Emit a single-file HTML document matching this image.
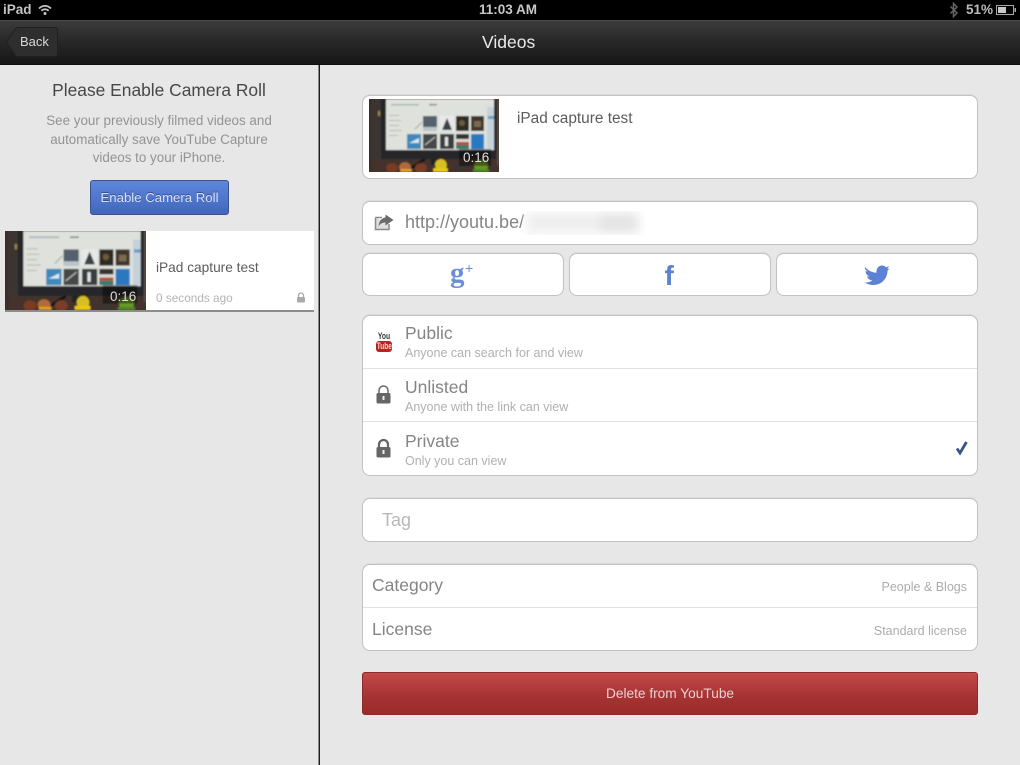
<!DOCTYPE html>
<html>
<head>
<meta charset="utf-8">
<style>
html,body{margin:0;padding:0;width:1020px;height:765px;overflow:hidden;background:#e7e7e7;font-family:"Liberation Sans",sans-serif}
.a{position:absolute;white-space:nowrap}
.card{position:absolute;box-sizing:border-box;background:#fff;border:1px solid #c2c2c2;border-radius:8px;box-shadow:0 -1px 0 #dcdcdc}
.line{position:absolute;left:363px;width:614px;height:1px;background:#e0e0e0}
.big{font-size:17.500px;color:#858585}
.sub{font-size:12.500px;color:#b0b0b0}
.right{font-size:12.500px;color:#acacac;text-align:right;right:53px}
</style>
</head>
<body>
<svg width="0" height="0" style="position:absolute">
<defs>
<filter id="b" x="-5%" y="-5%" width="110%" height="110%"><feGaussianBlur stdDeviation="0.7"/></filter>
<filter id="b2"><feGaussianBlur stdDeviation="5"/></filter>
<symbol id="thumb" viewBox="0 0 130 73" preserveAspectRatio="none">
<rect width="130" height="73" fill="#43332c"/>
<g filter="url(#b)">
<rect x="0" y="0" width="3" height="73" fill="#3a2e2a"/>
<rect x="3" y="0" width="9" height="60" fill="#3b3533"/>
<rect x="9" y="12" width="2" height="5" fill="#a08a50"/>
<rect x="128" y="0" width="2" height="66" fill="#5c5048"/>
<rect x="12" y="0" width="116" height="60" fill="#25252a"/>
<rect x="17" y="0" width="108" height="51" fill="#dfe2dc"/>
<rect x="118" y="8" width="7" height="42" fill="#c6d2da"/>
<rect x="119" y="17" width="6" height="3" fill="#6a9cc4"/>
<rect x="22" y="5" width="28" height="1.500" fill="#aab2b4"/>
<rect x="60" y="5" width="8" height="1.500" fill="#888"/>
<rect x="20" y="16" width="10" height="1" fill="#b4b8b2"/><rect x="20" y="21" width="12" height="1" fill="#b8bab4"/><rect x="20" y="26" width="10" height="1" fill="#b8bab4"/><rect x="20" y="31" width="13" height="1" fill="#b8bab4"/><rect x="20" y="36" width="9" height="1" fill="#b8bab4"/>
<path d="M46 30l7-7" stroke="#a0a29c" fill="none"/>
<rect x="54" y="17" width="14" height="15" fill="#55616d"/><rect x="54" y="28" width="14" height="4" fill="#bcc4cc"/>
<rect x="71" y="17" width="14" height="15" fill="#e8e8e8"/><path d="M78 19l-5 12h10z" fill="#3a3f48"/>
<rect x="87" y="17" width="13" height="15" fill="#2f2a26"/><circle cx="93" cy="24" r="3" fill="#6a5a38"/>
<rect x="102" y="17" width="13" height="15" fill="#40352c"/><rect x="105" y="22" width="7" height="6" fill="#7a6a50"/>
<rect x="38" y="35" width="14" height="15" fill="#3f88bc"/><path d="M40 44l10-5v5z" fill="#d8e8f0"/>
<rect x="54" y="35" width="14" height="15" fill="#45474a"/><path d="M56 46l10-8" stroke="#c8c8c8"/>
<rect x="71" y="35" width="14" height="15" fill="#383c40"/><path d="M76 38h3v9h-3z" fill="#e4e4e4"/>
<rect x="87" y="35" width="13" height="15" fill="#d8d8d4"/><rect x="87" y="35" width="13" height="5" fill="#333"/><rect x="87" y="43" width="13" height="3" fill="#b84a3a"/><rect x="87" y="46" width="13" height="4" fill="#3a7a6a"/>
<rect x="102" y="35" width="13" height="15" fill="#2a78c0"/>
<rect x="62" y="60" width="14" height="6" fill="#222"/>
<path d="M38 72l18-12" stroke="#111" stroke-width="2"/>
<ellipse cx="23" cy="69" rx="6" ry="5" fill="#7a3a22"/>
<ellipse cx="36" cy="68" rx="6" ry="5" fill="#b06a3a"/><rect x="31" y="70" width="12" height="3" fill="#e0a020"/>
<ellipse cx="52" cy="69" rx="6" ry="5" fill="#7a3e28"/>
<ellipse cx="72" cy="66" rx="6" ry="6" fill="#d8c024"/><rect x="64" y="69" width="15" height="4" fill="#e8c818"/>
<ellipse cx="92" cy="68" rx="6" ry="5" fill="#3a3432"/>
<ellipse cx="112" cy="67" rx="7" ry="6" fill="#6a9a2a"/><rect x="104" y="70" width="16" height="3" fill="#4e8a24"/>
<rect x="90" y="50" width="32" height="17" fill="#000" opacity=".4"/>
</g>
</symbol>
</defs>
</svg>

<!-- status bar -->
<div class="a" style="left:0;top:0;width:1020px;height:20px;background:#000"></div>
<div class="a" style="left:3px;top:2px;font-size:13.500px;font-weight:bold;color:#c4c4c4">iPad</div>
<svg class="a" style="left:38px;top:4px" width="14" height="12" viewBox="0 0 14 12"><path d="M1 4.500C4.500 1 9.500 1 13 4.500M3.300 6.800C5.500 4.700 8.500 4.700 10.700 6.800" stroke="#c4c4c4" stroke-width="1.700" fill="none"/><circle cx="7" cy="9.500" r="1.500" fill="#c4c4c4"/></svg>
<div class="a" style="left:479px;top:2px;font-size:13.500px;font-weight:bold;color:#c8c8c8">11:03 AM</div>
<svg class="a" style="left:949px;top:2px" width="10" height="16" viewBox="0 0 10 16"><path d="M1.500 4.500L8 11l-3.500 3.500v-13L8 5 1.500 11.500" stroke="#666" stroke-width="1.500" fill="none"/></svg>
<div class="a" style="left:966px;top:2px;font-size:13.500px;font-weight:bold;color:#bdbdbd">51%</div>
<svg class="a" style="left:996px;top:4px" width="21" height="12" viewBox="0 0 21 12"><rect x=".5" y="1.500" width="17" height="9" fill="none" stroke="#a8a8a8"/><rect x="2" y="3" width="8" height="6" fill="#c8c8c8"/><rect x="18.500" y="4" width="1.500" height="4" fill="#a8a8a8"/></svg>

<!-- nav -->
<div class="a" style="left:0;top:20px;width:1020px;height:44px;background:linear-gradient(#3c3c3c,#2a2a2a 40%,#171717);border-top:1px solid #4a4a4a;box-sizing:border-box"></div>
<div class="a" style="left:0;top:64px;width:1020px;height:1px;background:#111"></div>
<svg class="a" style="left:6px;top:27px" width="52" height="30" viewBox="0 0 52 30"><path d="M.5 15L9.500 1.500Q10 .5 12 .5H49Q51.500 .5 51.500 3V27Q51.500 29.500 49 29.500H12Q10 29.500 9.500 28.500Z" fill="#2e2e2e" stroke="#202020"/></svg>
<div class="a" style="left:20px;top:34px;font-size:13px;color:#d8d8d8">Back</div>
<div class="a" style="left:482px;top:32px;font-size:17.500px;color:#eaeaea">Videos</div>

<!-- divider -->
<div class="a" style="left:318px;top:65px;width:1px;height:700px;background:#8a8a8a"></div>
<div class="a" style="left:319px;top:65px;width:1px;height:700px;background:#1c1c1c"></div>

<!-- left panel -->
<div class="a" style="left:0;width:318px;text-align:center;top:80px;font-size:17.400px;color:#474747">Please Enable Camera Roll</div>
<div class="a" style="left:0;width:318px;text-align:center;top:112px;font-size:13.400px;line-height:18.500px;color:#939393">See your previously filmed videos and<br>automatically save YouTube Capture<br>videos to your iPhone.</div>
<div class="a" style="left:90px;top:180px;width:139px;height:35px;box-sizing:border-box;border:1px solid #37548e;border-radius:3px;background:linear-gradient(#5f86dd,#4167bd);text-align:center;font-size:13.200px;line-height:34px;color:#d8e2f6;text-shadow:0 -1px 0 #34518f">Enable Camera Roll</div>

<div class="a" style="left:5px;top:231px;width:309px;height:81px;background:#fff;border-bottom:2px solid #8c8c8c;box-sizing:border-box"></div>
<svg class="a" style="left:5px;top:231px" width="141" height="79"><use href="#thumb" width="141" height="79"/></svg>
<div class="a" style="left:110px;top:289px;font-size:13.500px;color:#dcdcdc">0:16</div>
<div class="a" style="left:156px;top:260px;font-size:13.700px;color:#5c5c5c">iPad capture test</div>
<div class="a" style="left:156px;top:291px;font-size:11.800px;color:#b4b4b4">0 seconds ago</div>
<svg class="a" style="left:296px;top:292px" width="10" height="11" viewBox="0 0 10 11"><path d="M2.500 5V3.500a2.500 2.500 0 0 1 5 0V5" stroke="#aaa" stroke-width="1.300" fill="none"/><rect x="1" y="5" width="8" height="5.500" rx="1" fill="#aaa"/></svg>

<!-- video card -->
<div class="card" style="left:362px;top:95px;width:616px;height:84px"></div>
<svg class="a" style="left:369px;top:99px" width="130" height="73"><use href="#thumb" width="130" height="73"/></svg>
<div class="a" style="left:463px;top:150px;font-size:13.500px;color:#e0e0e0">0:16</div>
<div class="a" style="left:517px;top:110px;font-size:15.400px;color:#5c5c5c">iPad capture test</div>

<!-- url -->
<div class="card" style="left:362px;top:201px;width:616px;height:44px"></div>
<svg class="a" style="left:374px;top:213px" width="20" height="18" viewBox="0 0 20 18"><path d="M1.500 4.500V16.500H15V11" stroke="#8a8a8a" stroke-width="1.500" fill="#dedede"/><path d="M1.500 4.500H8" stroke="#8a8a8a" stroke-width="1.500"/><path d="M11.500 1.500L19.500 7 11.500 12.500V9.500C8.500 9.500 6 10.500 4.500 13.500 4.800 8.500 7.500 5 11.500 4.500Z" fill="#6a6a6a"/></svg>
<div class="a" style="left:405px;top:212px;font-size:18px;color:#858585">http://youtu.be/</div>
<svg class="a" style="left:522px;top:205px" width="124" height="36"><g filter="url(#b2)"><rect x="4" y="8" width="114" height="20" fill="#efefef"/><rect x="78" y="8" width="36" height="20" fill="#e4e4e4"/></g></svg>

<!-- social -->
<div class="card" style="left:362px;top:253px;width:202px;height:43px"></div>
<div class="card" style="left:569px;top:253px;width:202px;height:43px"></div>
<div class="card" style="left:776px;top:253px;width:202px;height:43px"></div>
<div class="a" style="left:450px;top:256px;font-family:'Liberation Serif',serif;font-size:29px;line-height:34px;font-weight:bold;color:#6a8fd6">g</div>
<div class="a" style="left:465px;top:259px;font-size:14px;line-height:18px;color:#6a8fd6">+</div>
<div class="a" style="left:664.500px;top:259px;font-size:28px;line-height:34px;font-weight:bold;color:#5c82d0">f</div>
<svg class="a" style="left:864px;top:264px" width="26" height="22" viewBox="0 0 26 22"><path d="M1 3C4 6.500 8 8.500 12.500 8.800 11.800 4.500 15 1.500 18 1.500 20 1.500 21 2.300 22 3.300L25 2.200 23.300 5 25.500 4.500 23.500 6.800C23.500 14 18 21 9.500 21 6 21 3.500 20.300 1 18.500 3.800 18.800 6.500 18 8.300 16.300 5.500 16.200 3.800 14.500 3 12.500L5.500 12.300C2.800 11.500 1.500 9.300 1.500 7L4 7.800C1.500 6 .3 4.500 1 3Z" fill="#5b82d4"/></svg>

<!-- privacy -->
<div class="card" style="left:362px;top:315px;width:616px;height:161px"></div>
<div class="line" style="top:368px"></div>
<div class="line" style="top:421px"></div>
<div class="a" style="left:374px;top:332px;width:20px;text-align:center;font-size:9px;line-height:9px;font-weight:bold;color:#333;transform:scaleX(.75)">You</div>
<div class="a" style="left:376px;top:341px;width:16px;height:11px;border-radius:3px;background:#b8231e"></div>
<div class="a" style="left:374px;top:341px;width:20px;text-align:center;font-size:9px;line-height:11px;font-weight:bold;color:#f4d8d8;transform:scaleX(.72)">Tube</div>
<svg class="a" style="left:376px;top:384px" width="15" height="20" viewBox="0 0 15 20"><path d="M3 10V6.500a4.500 4.500 0 0 1 9 0V10" stroke="#6a6a6a" stroke-width="1.500" fill="none"/><rect x=".5" y="9" width="14" height="10.500" rx="1.500" fill="#666"/><rect x="6.500" y="12" width="2" height="4" fill="#eee"/></svg>
<svg class="a" style="left:376px;top:438px" width="15" height="20" viewBox="0 0 15 20"><path d="M3 10V6.500a4.500 4.500 0 0 1 9 0V10" stroke="#666" stroke-width="2.200" fill="none"/><rect x=".5" y="9" width="14" height="10.500" rx="1.500" fill="#666"/><rect x="6.500" y="12" width="2" height="4" fill="#eee"/></svg>
<div class="a big" style="left:405px;top:323px">Public</div>
<div class="a sub" style="left:405px;top:346px">Anyone can search for and view</div>
<div class="a big" style="left:405px;top:377px">Unlisted</div>
<div class="a sub" style="left:405px;top:400px">Anyone with the link can view</div>
<div class="a big" style="left:405px;top:431px">Private</div>
<div class="a sub" style="left:405px;top:454px">Only you can view</div>
<svg class="a" style="left:954px;top:440px" width="15" height="16" viewBox="0 0 15 16"><path d="M3 8.500L6 13 12.500 2" stroke="#34568c" stroke-width="2.800" fill="none"/></svg>

<!-- tag -->
<div class="card" style="left:362px;top:498px;width:616px;height:44px"></div>
<div class="a" style="left:382px;top:510px;font-size:18px;color:#b8b8b8">Tag</div>

<!-- category -->
<div class="card" style="left:362px;top:564px;width:616px;height:87px"></div>
<div class="line" style="top:607px"></div>
<div class="a big" style="left:372px;top:575px">Category</div>
<div class="a big" style="left:372px;top:619px">License</div>
<div class="a right" style="top:580px">People &amp; Blogs</div>
<div class="a right" style="top:624px">Standard license</div>

<!-- delete -->
<div class="a" style="left:362px;top:672px;width:616px;height:43px;box-sizing:border-box;border:1px solid #8a2c2c;border-radius:3px;background:linear-gradient(#c54a4a,#a93535 50%,#9c2a2a);text-align:center;font-size:13.700px;line-height:42px;color:#ecd0d0">Delete from YouTube</div>
</body>
</html>
